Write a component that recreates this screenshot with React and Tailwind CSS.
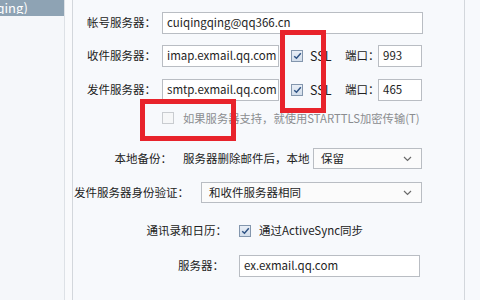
import React from "react";

const font = { fontFamily: '"Noto Sans CJK SC", "Noto Sans", sans-serif' };

function Check({ checked, disabled }) {
  if (disabled) {
    return <div className="w-[12px] h-[12px] border border-[#c9ccd0] bg-[#f6f7f8] shrink-0" />;
  }
  return (
    <div className="w-[12px] h-[12px] border border-[#8396ad] bg-gradient-to-b from-[#e8eef6] to-[#d3deeb] shrink-0 flex items-center justify-center">
      {checked && (
        <svg width="9" height="8" viewBox="0 0 9 8">
          <path d="M1.2 4.2 L3.5 6.3 L7.8 1.3" fill="none" stroke="#2f5384" strokeWidth="1.5" />
        </svg>
      )}
    </div>
  );
}

function Input({ w, value }) {
  return (
    <div className={`${w} h-[22px] border border-[#b9bdc3] bg-white flex items-center pl-[4px] text-[11.5px] text-[#1e1e1e] shrink-0 overflow-hidden whitespace-nowrap`}>
      {value}
    </div>
  );
}

function Select({ w, value }) {
  return (
    <div className={`${w} h-[21px] border border-[#b9bdc3] bg-[#fbfbfb] flex items-center pl-[7px] pr-[9px] text-[11.5px] text-[#1e1e1e] shrink-0`}>
      <span className="flex-1 whitespace-nowrap">{value}</span>
      <svg width="9" height="6" viewBox="0 0 9 6">
        <path d="M1 1 L4.5 4.5 L8 1" fill="none" stroke="#6a6a6a" strokeWidth="1.2" />
      </svg>
    </div>
  );
}

export default function App() {
  return (
    <div className="relative w-[480px] h-[300px] overflow-hidden bg-[#f7f9fc] flex text-[11.5px] text-[#222]" style={font}>
      {/* sidebar */}
      <div className="w-[64px] h-full bg-[#f5f7fa] shrink-0">
        <div className="h-[16px] bg-[#8ea3b4] flex items-center">
          <div className="w-[28px] overflow-hidden flex justify-end">
            <span className="text-white text-[13px] leading-none whitespace-nowrap -mt-[1px]">(cuiqingqing)</span>
          </div>
        </div>
      </div>
      <div className="w-[1px] h-full bg-[#dde1e6] shrink-0" />
      <div className="w-[7px] h-full bg-[#f9fafc] shrink-0" />
      <div className="w-[1px] h-full bg-[#d3d7dc] shrink-0" />

      {/* content */}
      <div className="w-[391px] h-full shrink-0 flex flex-col pt-[12px]">
        <div className="flex items-center h-[22px]">
          <div className="w-[83px] shrink-0 text-right whitespace-nowrap">帐号服务器：</div>
          <div className="w-[6px] shrink-0" />
          <Input w="w-[261px]" value="cuiqingqing@qq366.cn" />
        </div>

        <div className="flex items-center h-[22px] mt-[11px]">
          <div className="w-[83px] shrink-0 text-right whitespace-nowrap">收件服务器：</div>
          <div className="w-[6px] shrink-0" />
          <Input w="w-[117px]" value="imap.exmail.qq.com" />
          <div className="w-[12px] shrink-0" />
          <Check checked />
          <div className="w-[7px] shrink-0" />
          <div className="w-[35px] shrink-0 text-[12.5px]">SSL</div>
          <div className="w-[33px] shrink-0 whitespace-nowrap">端口：</div>
          <Input w="w-[44px]" value="993" />
        </div>

        <div className="flex items-center h-[22px] mt-[12px]">
          <div className="w-[83px] shrink-0 text-right whitespace-nowrap">发件服务器：</div>
          <div className="w-[6px] shrink-0" />
          <Input w="w-[117px]" value="smtp.exmail.qq.com" />
          <div className="w-[12px] shrink-0" />
          <Check checked />
          <div className="w-[7px] shrink-0" />
          <div className="w-[35px] shrink-0 text-[12.5px]">SSL</div>
          <div className="w-[33px] shrink-0 whitespace-nowrap">端口：</div>
          <Input w="w-[44px]" value="465" />
        </div>

        <div className="flex items-center h-[16px] mt-[9px] pl-[89px]">
          <Check disabled />
          <div className="w-[9px] shrink-0" />
          <div className="text-[#8b8d90] text-[11.3px] whitespace-nowrap">如果服务器支持，就使用STARTTLS加密传输(T)</div>
        </div>

        <div className="flex items-center h-[21px] mt-[22px]">
          <div className="w-[99px] shrink-0 text-right whitespace-nowrap">本地备份：</div>
          <div className="w-[11px] shrink-0" />
          <div className="w-[130px] shrink-0 whitespace-nowrap">服务器删除邮件后，本地</div>
          <Select w="w-[109px]" value="保留" />
        </div>

        <div className="flex items-center h-[21px] mt-[13px]">
          <div className="w-[128px] shrink-0 pl-[1px] whitespace-nowrap">发件服务器身份验证：</div>
          <Select w="w-[221px]" value="和收件服务器相同" />
        </div>

        <div className="flex items-center h-[16px] mt-[20px]">
          <div className="w-[154px] shrink-0 text-right whitespace-nowrap">通讯录和日历：</div>
          <div className="w-[12px] shrink-0" />
          <Check checked />
          <div className="w-[8px] shrink-0" />
          <div className="whitespace-nowrap">通过ActiveSync同步</div>
        </div>

        <div className="flex items-center h-[22px] mt-[16px]">
          <div className="w-[151px] shrink-0 text-right whitespace-nowrap">服务器：</div>
          <div className="w-[15px] shrink-0" />
          <Input w="w-[181px]" value="ex.exmail.qq.com" />
        </div>
      </div>

      <div className="w-[1px] h-full bg-[#d3d7dc] shrink-0" />
      <div className="flex-1 h-full bg-[#f7f9fc]" />

      {/* red annotation boxes */}
      <div className="absolute left-[280px] top-[30px] w-[46px] h-[83px] border-[5px] border-[#e8232b]" />
      <div className="absolute left-[140px] top-[99px] w-[96px] h-[42px] border-[5px] border-[#e8232b]" />
    </div>
  );
}
